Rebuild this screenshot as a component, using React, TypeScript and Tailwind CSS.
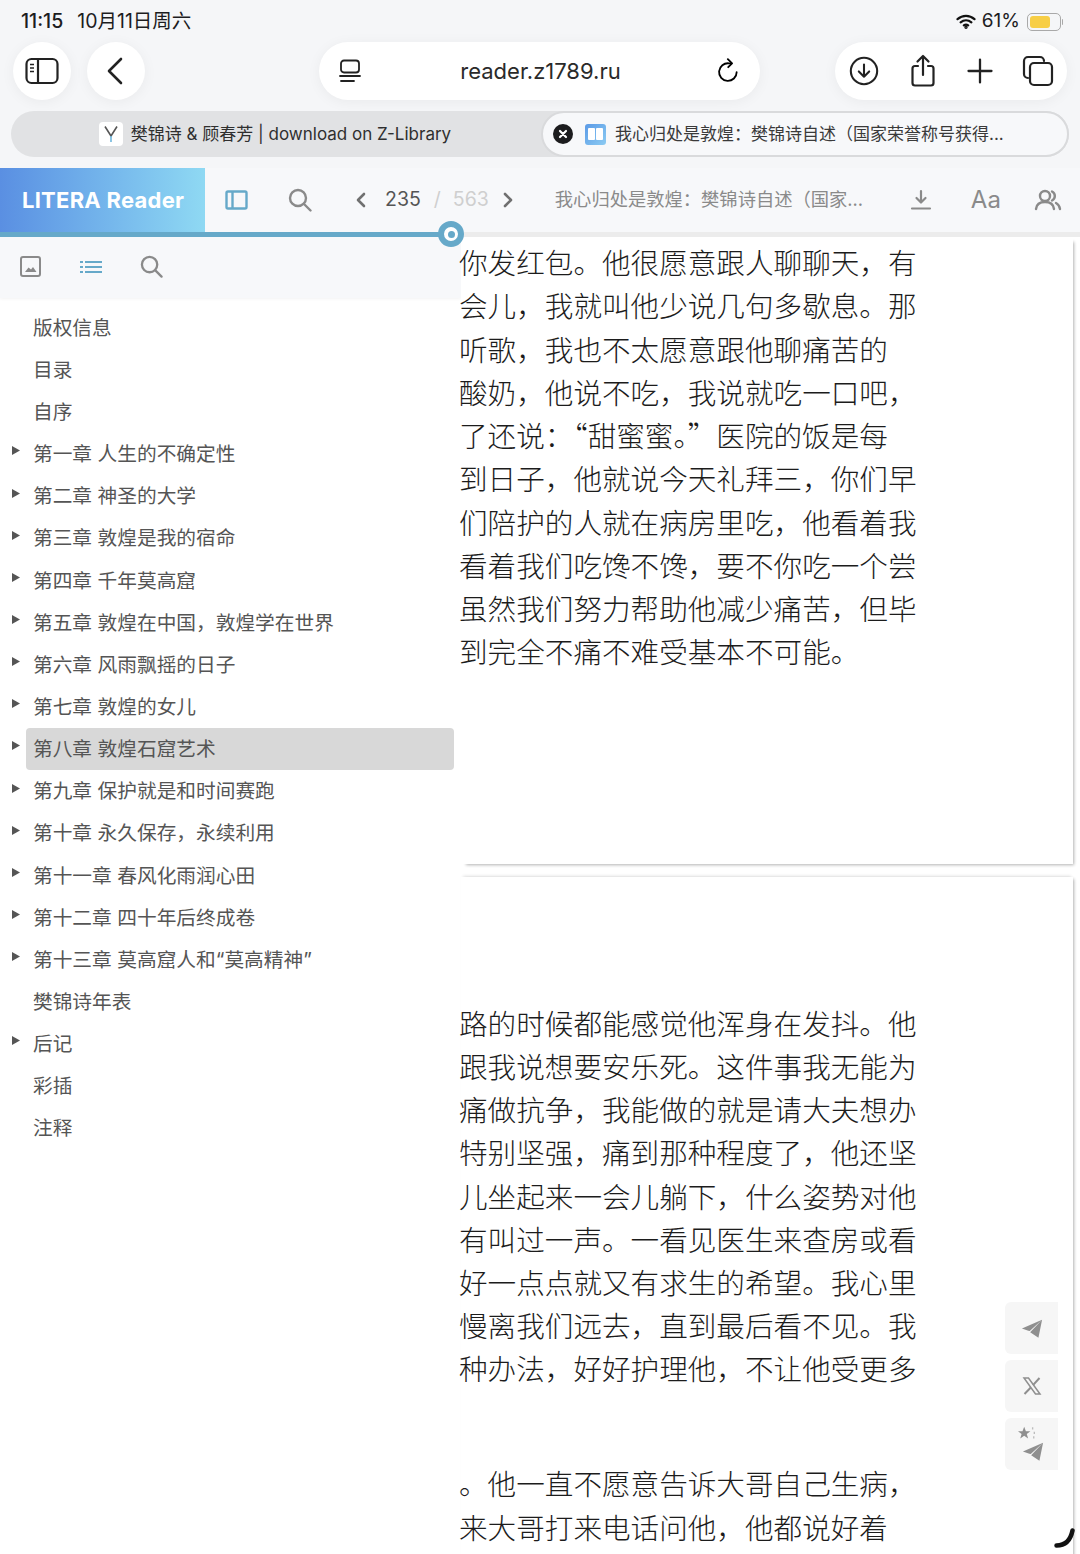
import type { ReactNode } from "react";

const toc: [string, boolean][] = [
  ["版权信息", false],
  ["目录", false],
  ["自序", false],
  ["第一章 人生的不确定性", true],
  ["第二章 神圣的大学", true],
  ["第三章 敦煌是我的宿命", true],
  ["第四章 千年莫高窟", true],
  ["第五章 敦煌在中国，敦煌学在世界", true],
  ["第六章 风雨飘摇的日子", true],
  ["第七章 敦煌的女儿", true],
  ["第八章 敦煌石窟艺术", true],
  ["第九章 保护就是和时间赛跑", true],
  ["第十章 永久保存，永续利用", true],
  ["第十一章 春风化雨润心田", true],
  ["第十二章 四十年后终成卷", true],
  ["第十三章 莫高窟人和“莫高精神”", true],
  ["樊锦诗年表", false],
  ["后记", true],
  ["彩插", false],
  ["注释", false],
];

const pageOne = [
  "你发红包。他很愿意跟人聊聊天，有",
  "会儿，我就叫他少说几句多歇息。那",
  "听歌，我也不太愿意跟他聊痛苦的",
  "酸奶，他说不吃，我说就吃一口吧，",
  "了还说：“甜蜜蜜。”医院的饭是每",
  "到日子，他就说今天礼拜三，你们早",
  "们陪护的人就在病房里吃，他看着我",
  "看着我们吃馋不馋，要不你吃一个尝",
  "虽然我们努力帮助他减少痛苦，但毕",
  "到完全不痛不难受基本不可能。",
];

const pageTwo = [
  "路的时候都能感觉他浑身在发抖。他",
  "跟我说想要安乐死。这件事我无能为",
  "痛做抗争，我能做的就是请大夫想办",
  "特别坚强，痛到那种程度了，他还坚",
  "儿坐起来一会儿躺下，什么姿势对他",
  "有叫过一声。一看见医生来查房或看",
  "好一点点就又有求生的希望。我心里",
  "慢离我们远去，直到最后看不见。我",
  "种办法，好好护理他，不让他受更多",
];

const pageTwoEnd = ["。他一直不愿意告诉大哥自己生病，", "来大哥打来电话问他，他都说好着"];

// 浏览器工具栏图标
const Stroke = ({ size, children, width = 2.2 }: { size: number; children: ReactNode; width?: number }) => (
  <svg width={size} height={size} viewBox="0 0 34 34" fill="none" stroke="currentColor" strokeWidth={width} strokeLinecap="round" strokeLinejoin="round">
    {children}
  </svg>
);

const Round = ({ children }: { children: ReactNode }) => (
  <div className="flex h-[58px] w-[58px] items-center justify-center rounded-full bg-white shadow-[0_2px_14px_rgba(0,0,0,0.05)]">{children}</div>
);

const Plane = ({ size }: { size: number }) => (
  <svg width={size} height={size} viewBox="0 0 24 24" fill="#8f8f8f">
    <path d="M23 3 1 12.5l7 2.5 1.5 0.2L23 3Zm0 0-13 13.5 0 0 9 6L23 3Z" />
  </svg>
);

const SideButton = ({ children }: { children: ReactNode }) => (
  <div className="flex h-[52px] w-[53px] items-center justify-center rounded-l-md bg-[#f6f6f6]">{children}</div>
);

function ReadingLine({ text }: { text: string }) {
  return <div className="-ml-[2px] whitespace-nowrap">{text}</div>;
}

export default function App() {
  return (
    <div lang="zh-CN" className="relative flex h-[1554px] w-full flex-col overflow-hidden bg-white font-['Inter','Noto_Sans_CJK_SC',sans-serif]">
      {/* Safari chrome */}
      <div className="flex h-[168px] shrink-0 flex-col bg-[#f5f6f8]">
        <div className="flex h-[42px] items-center justify-between pl-[21px] pr-[19px] pt-[1px] text-[19.5px] text-[#1d1d1f]">
          <div className="flex gap-[14px]">
            <span className="font-medium">11:15</span>
            <span>10月11日周六</span>
          </div>
          <div className="flex items-center gap-[6px] text-[19px]">
            <svg width="20" height="15" viewBox="0 0 20 15" fill="none" stroke="#111" strokeWidth="2.2" strokeLinecap="round">
              <path d="M1.5 5.2c5-4.4 12-4.4 17 0" />
              <path d="M4.6 8.4c3.2-2.7 7.6-2.7 10.8 0" />
              <path d="M7.8 11.4c1.3-1 3.1-1 4.400 0" />
              <circle cx="10" cy="13.2" r="0.6" fill="#111" />
            </svg>
            <span>61%</span>
            <div className="relative ml-[1px] h-[18px] w-[34px] rounded-[5px] border border-[#a9a9a9] p-[2px]">
              <div className="h-full w-[20px] rounded-[3px] bg-[#f7ce46]" />
              <div className="absolute -right-[3px] top-[5px] h-[6px] w-[1.5px] rounded-r bg-[#a9a9a9]" />
            </div>
          </div>
        </div>

        <div className="flex h-[58px] items-center pl-[13px]">
          <div className="flex gap-4">
            <Round>
              <svg width="34" height="28" viewBox="0 0 34 28" fill="none" stroke="#222" strokeWidth="2.2">
                <rect x="1.5" y="2" width="31" height="24" rx="5" />
                <path d="M13 2v24" />
                <path d="M5 7.5h4M5 11h4M5 14.5h4" strokeWidth="1.6" />
              </svg>
            </Round>
            <Round>
              <svg className="-ml-[2px]" width="18" height="28" viewBox="0 0 18 28" fill="none" stroke="#222" strokeWidth="2.6" strokeLinecap="round" strokeLinejoin="round">
                <path d="M15 2 3 14l12 12" />
              </svg>
            </Round>
          </div>
          <div className="ml-[174px] flex h-[58px] w-[441px] items-center justify-between rounded-full bg-white pl-[20px] pr-[18px] shadow-[0_2px_14px_rgba(0,0,0,0.05)]">
            <svg width="22" height="24" viewBox="0 0 22 24" fill="none" stroke="#222" strokeWidth="1.8" strokeLinecap="round">
              <rect x="2" y="1.5" width="18" height="12" rx="3" />
              <path d="M1 17h20M2 22h13" />
            </svg>
            <span className="ml-[4px] text-[22px] text-[#2a2a2a]">reader.z1789.ru</span>
            <Stroke size={26} width={2.4}>
              <path d="M27 18.5A11.5 11.5 0 1 1 17 7h3" />
              <path d="m15.5 1.5 5.5 5.5-5 5" />
            </Stroke>
          </div>
          <div className="ml-[75px] flex h-[58px] w-[232px] items-center justify-between rounded-full bg-white pl-[13px] pr-[12px] text-[#222] shadow-[0_2px_14px_rgba(0,0,0,0.05)]">
            <Stroke size={32}>
              <circle cx="17" cy="17" r="14" />
              <path d="M17 10v13M11.5 17.5 17 23l5.5-5.5" />
            </Stroke>
            <Stroke size={34}>
              <path d="M12 12H9a2.5 2.5 0 0 0-2.500 2.500V29A2.500 2.500 0 0 0 9 31.500h16a2.500 2.500 0 0 0 2.500-2.500V14.500A2.500 2.500 0 0 0 25 12h-3" />
              <path d="M17 21V2M11.500 7.500 17 2l5.500 5.500" />
            </Stroke>
            <Stroke size={30} width={2.6}>
              <path d="M17 4v26M4 17h26" />
            </Stroke>
            <Stroke size={34}>
              <path d="M7 24a4 4 0 0 1-4-4V7a4 4 0 0 1 4-4h12a4 4 0 0 1 4 4" />
              <rect x="9" y="9" width="22" height="22" rx="4" />
            </Stroke>
          </div>
        </div>

        <div className="mx-[11px] mt-[11px] flex h-[46px] w-[1058px] rounded-[23px] bg-[#e1e2e4]">
          <div className="flex w-[530px] items-center justify-center gap-[8px] pr-[2px] text-[17px] text-[#2f2f2f]">
            <div className="flex h-[24px] w-[24px] items-center justify-center rounded-[4px] bg-white">
              <svg width="14" height="18" viewBox="0 0 14 18" fill="none" strokeWidth="1.6">
                <path d="M1 1.500 7 11 13 1.500" stroke="#555" />
                <path d="M7 11v6" stroke="#6fb6dc" />
              </svg>
            </div>
            <span className="pt-[1px]">樊锦诗 &amp; 顾春芳 | download on Z-Library</span>
          </div>
          <div className="flex w-[528px] items-center rounded-[23px] border-2 border-[#d9dadc] bg-[#f7f8fa] pl-[10px] text-[17px] text-[#3a3a3a]">
            <div className="flex h-[20px] w-[20px] items-center justify-center rounded-full bg-[#1c1c1e]">
              <svg width="10" height="10" viewBox="0 0 10 10" stroke="#fff" strokeWidth="2.2" strokeLinecap="round">
                <path d="m2 2 6 6M8 2 2 8" />
              </svg>
            </div>
            <div className="ml-[12px] flex h-[21px] w-[21px] items-center justify-center rounded-[3px] bg-gradient-to-br from-[#5b9ae6] to-[#8ccbf2]">
              <div className="flex gap-[1px]">
                <div className="h-[12px] w-[7px] rounded-[1px] bg-white" />
                <div className="h-[12px] w-[7px] rounded-[1px] bg-white" />
              </div>
            </div>
            <span className="ml-[9px] whitespace-nowrap pt-[1px]">我心归处是敦煌：樊锦诗自述（国家荣誉称号获得...</span>
          </div>
        </div>
      </div>

      {/* reader header */}
      <div className="flex h-[64px] shrink-0 items-center bg-[#f7f8fa]">
        <div className="flex h-full w-[205px] items-center bg-gradient-to-r from-[#5a8fe2] to-[#8fd9f3] pl-[22px] text-[22px] font-bold tracking-[0.25px] text-white">
          LITERA Reader
        </div>
        <svg className="ml-[20px]" width="23" height="20" viewBox="0 0 23 20" fill="none" stroke="#66a9c9" strokeWidth="2.4">
          <rect x="1.500" y="1.500" width="20" height="17" rx="1.500" />
          <path d="M7.500 1.500v17" />
        </svg>
        <svg className="ml-[40px]" width="24" height="24" viewBox="0 0 24 24" fill="none" stroke="#8a8a8a" strokeWidth="2.4" strokeLinecap="round">
          <circle cx="10" cy="10" r="8" />
          <path d="m16 16 6.500 6.500" />
        </svg>
        <svg className="ml-[43px]" width="12" height="16" viewBox="0 0 12 16" fill="none" stroke="#707070" strokeWidth="2.600" strokeLinecap="round" strokeLinejoin="round">
          <path d="M9 2 3 8l6 6" />
        </svg>
        <span className="ml-[18px] text-[19.500px] text-[#555]">235</span>
        <span className="ml-[13px] text-[19.500px] text-[#cfcfcf]">/</span>
        <span className="ml-[12px] text-[19.500px] text-[#cfcfcf]">563</span>
        <svg className="ml-[13px]" width="12" height="16" viewBox="0 0 12 16" fill="none" stroke="#707070" strokeWidth="2.600" strokeLinecap="round" strokeLinejoin="round">
          <path d="m3 2 6 6-6 6" />
        </svg>
        <span className="ml-[41px] w-[310px] whitespace-nowrap text-[18.300px] text-[#8a8a8a]">我心归处是敦煌：樊锦诗自述（国家...</span>
        <svg className="ml-[45px]" width="22" height="22" viewBox="0 0 22 22" fill="none" stroke="#8a8a8a" strokeWidth="2.200" strokeLinecap="round" strokeLinejoin="round">
          <path d="M11 2v11M6.500 9 11 13.500 15.500 9M2 19.500h18" />
        </svg>
        <span className="ml-[39px] text-[24px] text-[#8a8a8a]">Aa</span>
        <svg className="ml-[33px]" width="28" height="22" viewBox="0 0 28 22" fill="none" stroke="#8a8a8a" strokeWidth="2.400" strokeLinecap="round">
          <circle cx="11" cy="7" r="5" />
          <path d="M2 20c.5-4.500 4-7 9-7s8.500 2.500 9 7" />
          <path d="M18 2.500a5 5 0 0 1 0 9M22 14c2 1 3.500 3 4 6" />
        </svg>
      </div>

      {/* progress */}
      <div className="relative h-[5px] shrink-0 bg-[#ececec]">
        <div className="h-full w-[451px] bg-[#66a9c9]" />
        <div className="absolute left-[438px] -top-[11px] z-10 flex h-[26px] w-[26px] items-center justify-center rounded-full border-[6px] border-[#66a9c9] bg-white">
          <div className="h-[7px] w-[7px] rounded-full bg-[#66a9c9]" />
        </div>
      </div>

      <div className="flex min-h-0 flex-1">
        {/* contents panel */}
        <div className="w-[461px] shrink-0 bg-white">
          <div className="flex h-[61px] items-center bg-[#f7f8fa] pb-[2px] pl-[20px] shadow-[0_1px_3px_rgba(0,0,0,0.05)]">
            <svg width="21" height="21" viewBox="0 0 21 21" fill="none" stroke="#8a8a8a" strokeWidth="2">
              <rect x="1" y="1" width="19" height="19" rx="2" />
              <path d="m5 16 3.500-4.500 2.500 2 2-2.500 3.500 5Z" fill="#8a8a8a" stroke="none" />
            </svg>
            <svg className="ml-[39px]" width="22" height="14" viewBox="0 0 22 14" stroke="#66a9c9" strokeWidth="2.200">
              <path d="M0 2h3M5 2h17M0 7h3M5 7h17M0 12h3M5 12h17" />
            </svg>
            <svg className="ml-[38px]" width="23" height="23" viewBox="0 0 24 24" fill="none" stroke="#8a8a8a" strokeWidth="2.400" strokeLinecap="round">
              <circle cx="10" cy="10" r="8" />
              <path d="m16 16 6.500 6.500" />
            </svg>
          </div>
          <div className="mt-[9px] text-[19.700px] text-[#555]">
            {toc.map(([label, hasArrow], i) => (
              <div key={label} className="flex h-[42.150px] items-center pl-[12px] pr-[7px]">
                <div className="w-[14px] shrink-0 pb-[7px]">
                  {hasArrow && (
                    <svg className="block" width="8" height="9" viewBox="0 0 8 9" fill="#555">
                      <path d="M0 0 8 4.500 0 9Z" />
                    </svg>
                  )}
                </div>
                <div className={i === 10 ? "flex h-[42px] flex-1 items-center rounded-[4px] bg-[#d8d8d8] pl-[7px] pt-[1px]" : "flex h-[42px] flex-1 items-center pl-[7px] pt-[1px]"}>
                  {label}
                </div>
              </div>
            ))}
          </div>
        </div>

        {/* book pages */}
        <div className="w-[612px] font-['Noto_Sans_CJK_SC',sans-serif] text-[28.600px] font-light text-[#1c1c1c]">
          <div className="h-[627px] bg-white pt-[3px] leading-[43.250px] shadow-[3px_3px_3px_-2px_rgba(0,0,0,0.3)]">
            {pageOne.map((line) => (
              <ReadingLine key={line} text={line} />
            ))}
          </div>
          <div className="mt-[13px] h-[700px] bg-white pt-[124px] leading-[43.150px] shadow-[3px_0_3px_-2px_rgba(0,0,0,0.3),0_-3px_3px_-2px_rgba(0,0,0,0.12)]">
            {pageTwo.map((line) => (
              <ReadingLine key={line} text={line} />
            ))}
            <div className="h-[72px]" />
            {pageTwoEnd.map((line) => (
              <ReadingLine key={line} text={line} />
            ))}
          </div>
        </div>
      </div>

      {/* share buttons */}
      <div className="absolute left-[1005px] top-[1302px] flex flex-col gap-[6px]">
        <SideButton>
          <Plane size={22} />
        </SideButton>
        <SideButton>
          <svg width="20" height="20" viewBox="0 0 20 20" fill="none" stroke="#8f8f8f" strokeWidth="1.500">
            <path d="M2 2h4.500L18 18h-4.500Z" />
            <path d="M17.500 2 11 9.200M8.800 11.500 2.500 18" strokeWidth="2" />
          </svg>
        </SideButton>
        <SideButton>
          <div className="flex flex-col items-start">
            <svg className="-mb-[2px] -ml-[1px]" width="18" height="16" viewBox="0 0 16 14" fill="#8f8f8f">
              <path d="M5.500 0.500 7 4.500h4L7.800 7l1.200 4-3.500-2.400L2 11l1.200-4L0 4.500h4Z" />
              <path d="M13 1v2M14.500 5v2M14 9v2" stroke="#bdbdbd" strokeWidth="1.200" />
            </svg>
            <div className="ml-[3px]">
              <Plane size={22} />
            </div>
          </div>
        </SideButton>
      </div>

      {/* iPad corner marker */}
      <svg className="absolute right-[4px] bottom-[6px]" width="22" height="20" viewBox="0 0 22 20" fill="none" stroke="#111" strokeWidth="4.500" strokeLinecap="round">
        <path d="M2.500 17.500c8 0 14-5 16-15" />
      </svg>
    </div>
  );
}
